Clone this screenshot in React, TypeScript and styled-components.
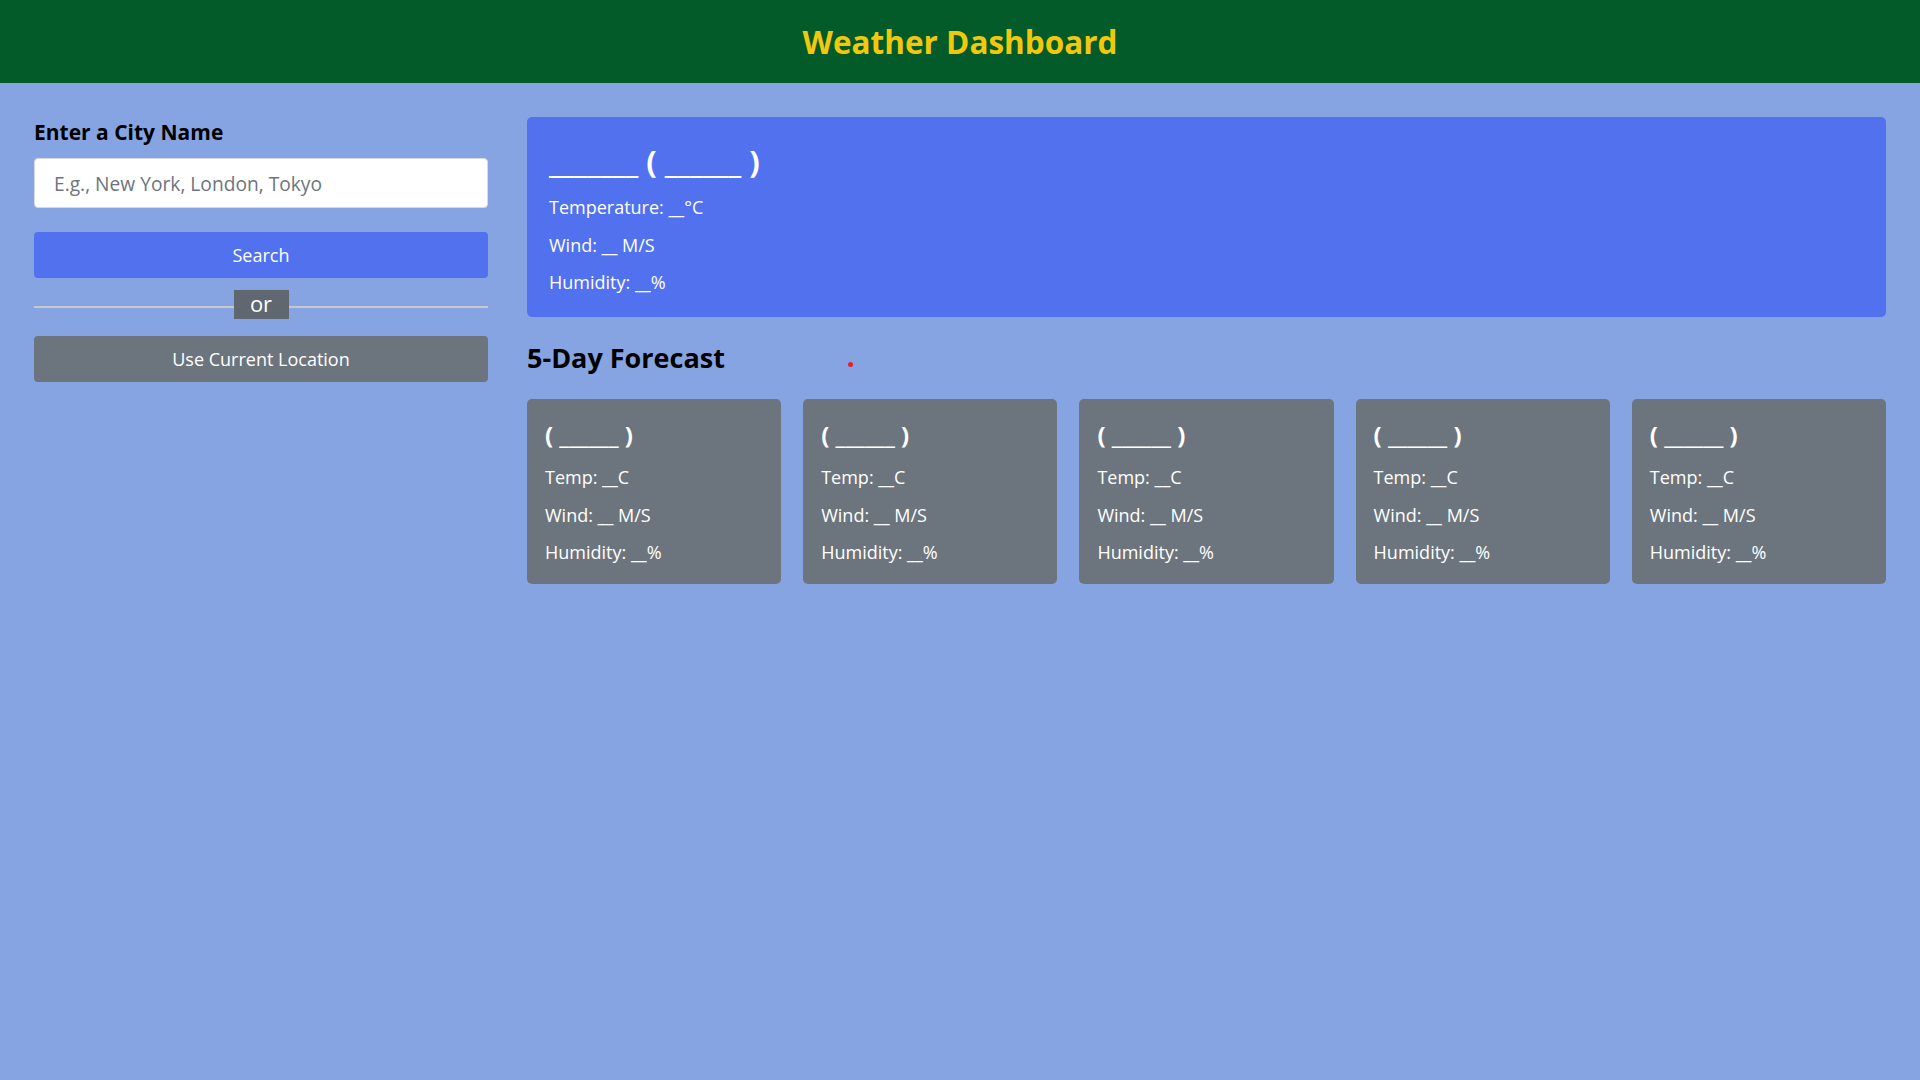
import React from "react";
import styled, { createGlobalStyle } from "styled-components";

const Global = createGlobalStyle`
  html, body { margin: 0; padding: 0; }
  body {
    font-family: "Open Sans", "Liberation Sans", sans-serif;
    background: #86a4e1;
    min-height: 1080px;
    color: #000;
  }
  * { box-sizing: border-box; }
`;

const Header = styled.header`
  height: 83px;
  background: #035b2a;
  display: flex;
  align-items: center;
  justify-content: center;
`;

const Title = styled.h1`
  margin: 0;
  font-size: 31.5px;
  font-weight: 700;
  color: #f2c80f;
`;

const Main = styled.main`
  display: grid;
  grid-template-columns: 454px 1fr;
  column-gap: 39px;
  padding: 34px 34px 0;
`;

const Sidebar = styled.aside`
  display: flex;
  flex-direction: column;
`;

const Label = styled.label`
  font-size: 21px;
  font-weight: 700;
  line-height: 25px;
  margin: 3px 0 13px;
`;

const Input = styled.input`
  height: 50px;
  width: 100%;
  border: 1px solid #d6d9de;
  border-radius: 4px;
  background: #fff;
  padding: 0 19px;
  margin-bottom: 24px;
  font-family: inherit;
  font-size: 19.2px;
  color: #333;
  &::placeholder { color: #6c757d; }
`;

const Button = styled.button<{ $variant: "primary" | "secondary" }>`
  height: 46px;
  width: 100%;
  border: none;
  border-radius: 4px;
  font-family: inherit;
  font-size: 18px;
  color: #fff;
  background: ${(p) => (p.$variant === "primary" ? "#5271ef" : "#6c757d")};
  cursor: pointer;
`;

const Divider = styled.div`
  display: grid;
  grid-template-columns: 1fr auto 1fr;
  align-items: center;
  margin: 12px 0 17px;
  &::before, &::after {
    content: "";
    height: 2px;
    background: #c5c8ce;
    margin-top: 5px;
  }
`;

const Or = styled.span`
  width: 55px;
  height: 29px;
  background: #5f6770;
  color: #fff;
  font-size: 22px;
  line-height: 27px;
  text-align: center;
`;

const Content = styled.section`
  display: flex;
  flex-direction: column;
  position: relative;
`;

const CurrentCard = styled.div`
  height: 200px;
  background: #5271ef;
  border-radius: 5px;
  padding: 26px 22px 0;
  color: #fff;
`;

const CardTitle = styled.h2`
  margin: 0 0 10px;
  font-size: 31px;
  font-weight: 700;
  line-height: 36px;
  white-space: pre;
`;

const Line = styled.p`
  margin: 0;
  font-size: 18px;
  line-height: 37.5px;
`;

const SectionTitle = styled.h2`
  margin: 21px 0 21px;
  font-size: 27px;
  font-weight: 700;
  line-height: 40px;
`;

const Dot = styled.span`
  position: absolute;
  left: 321px;
  top: 245px;
  width: 5px;
  height: 5px;
  border-radius: 50%;
  background: #e0222c;
`;

const Forecast = styled.div`
  display: grid;
  grid-template-columns: repeat(5, 1fr);
  column-gap: 22px;
`;

const DayCard = styled.div`
  height: 185px;
  background: #6c757d;
  border-radius: 5px;
  padding: 20px 18px 0;
  color: #fff;
`;

const SmallTitle = styled.h3`
  margin: 0 0 8px;
  font-size: 24px;
  font-weight: 700;
  line-height: 32px;
  white-space: pre;
`;

const days = [0, 1, 2, 3, 4];

export default function App() {
  return (
    <>
      <Global />
      <Header>
        <Title>Weather Dashboard</Title>
      </Header>
      <Main>
        <Sidebar>
          <Label htmlFor="city">Enter a City Name</Label>
          <Input id="city" placeholder="E.g., New York, London, Tokyo" />
          <Button $variant="primary">Search</Button>
          <Divider>
            <Or>or</Or>
          </Divider>
          <Button $variant="secondary">Use Current Location</Button>
        </Sidebar>
        <Content>
          <CurrentCard>
            <CardTitle>{"_______ ( ______ )"}</CardTitle>
            <Line>Temperature: __°C</Line>
            <Line>Wind: __ M/S</Line>
            <Line>Humidity: __%</Line>
          </CurrentCard>
          <SectionTitle>5-Day Forecast</SectionTitle>
          <Dot />
          <Forecast>
            {days.map((d) => (
              <DayCard key={d}>
                <SmallTitle>{"( ______ )"}</SmallTitle>
                <Line>Temp: __C</Line>
                <Line>Wind: __ M/S</Line>
                <Line>Humidity: __%</Line>
              </DayCard>
            ))}
          </Forecast>
        </Content>
      </Main>
    </>
  );
}
